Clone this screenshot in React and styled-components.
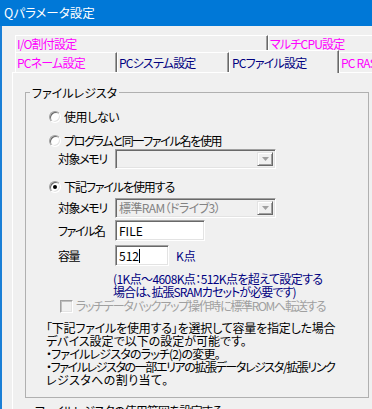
import styled, { createGlobalStyle } from "styled-components";

const GlobalStyle = createGlobalStyle`
  html, body {
    margin: 0;
    padding: 0;
    height: 409px;
    overflow: hidden;
    background: #f0f0f0;
  }
  body {
    font-family: "Noto Sans CJK JP", "Noto Sans", sans-serif;
    font-size: 12px;
    font-feature-settings: "palt";
    color: #000;
  }
`;

export default function App() {
  return (
    <>
      <GlobalStyle />
      <Window>
        <TitleBar>Qパラメータ設定</TitleBar>
        <Body>
          <TabControl>
            <TabRow $height={17}>
              <Tab $width={253} $color="#ff00ff">I/O割付設定</Tab>
              <Tab $color="#ff00ff">マルチCPU設定</Tab>
            </TabRow>
            <TabRow $height={20}>
              <Tab $width={102} $color="#ff00ff">PCネーム設定</Tab>
              <Tab $width={112} $color="#000080">PCシステム設定</Tab>
              <ActiveTab $width={110}>PCファイル設定</ActiveTab>
              <Tab $color="#ff00ff">PC RAS設定</Tab>
            </TabRow>
            <Panel>
              <GroupBox>
                <Legend>ファイルレジスタ</Legend>
                <RadioRow $gap={10} $spacing={-0.4}>
                  <Radio />
                  使用しない
                </RadioRow>
                <RadioRow $gap={8} $spacing={-1.3}>
                  <Radio />
                  プログラムと同一ファイル名を使用
                </RadioRow>
                <FieldRow $gap={0} $height={20}>
                  <FieldLabel>対象メモリ</FieldLabel>
                  <Combo>
                    <ComboText />
                    <DropButton>
                      <DropArrow />
                    </DropButton>
                  </Combo>
                </FieldRow>
                <RadioRow $gap={10} $spacing={-1.1}>
                  <Radio $checked />
                  下記ファイルを使用する
                </RadioRow>
                <FieldRow $gap={3} $height={20}>
                  <FieldLabel>対象メモリ</FieldLabel>
                  <Combo>
                    <ComboText>標準RAM（ドライブ3）</ComboText>
                    <DropButton>
                      <DropArrow />
                    </DropButton>
                  </Combo>
                </FieldRow>
                <FieldRow $gap={2} $height={21}>
                  <FieldLabel>ファイル名</FieldLabel>
                  <TextBox $width={90}>FILE</TextBox>
                </FieldRow>
                <FieldRow $gap={4} $height={21}>
                  <FieldLabel>容量</FieldLabel>
                  <TextBox $width={54}>
                    512
                    <Caret />
                  </TextBox>
                  <Unit>K点</Unit>
                </FieldRow>
                <Note>
                  <Line $spacing={-0.6}>(1K点～4608K点：512K点を超えて設定する</Line>
                  <Line $spacing={-0.9}>場合は、拡張SRAMカセットが必要です)</Line>
                </Note>
                <CheckRow>
                  <CheckBox />
                  ラッチデータバックアップ操作時に標準ROMへ転送する
                </CheckRow>
                <Paragraph>
                  <Line $spacing={-0.2}>「下記ファイルを使用する」を選択して容量を指定した場合</Line>
                  <Line $spacing={0}>デバイス設定で以下の設定が可能です。</Line>
                  <Line $spacing={-0.8}>・ファイルレジスタのラッチ(2)の変更。</Line>
                  <Line $spacing={-1.4}>・ファイルレジスタの一部エリアの拡張データレジスタ/拡張リンク</Line>
                  <Line $spacing={0.4}>レジスタへの割り当て。</Line>
                </Paragraph>
              </GroupBox>
              <CutText>ファイルレジスタの使用範囲を設定する</CutText>
            </Panel>
          </TabControl>
        </Body>
      </Window>
    </>
  );
}

function DropArrow() {
  return (
    <svg width="7" height="4" viewBox="0 0 7 4">
      <path d="M0 0h7L3.5 4z" fill="#a0a0a0" />
    </svg>
  );
}

const Window = styled.div`
  width: 372px;
  height: 409px;
  overflow: hidden;
  display: flex;
  flex-direction: column;
`;

const TitleBar = styled.div`
  height: 26px;
  flex-shrink: 0;
  background: #0078d7;
  color: #fff;
  padding-left: 4px;
  display: flex;
  align-items: center;
  font-size: 12.5px;
  line-height: 1;
`;

const Body = styled.div`
  flex: 1;
  display: flex;
  border-left: 2px solid #1a7fd6;
  padding: 9px 0 0 10px;
  min-height: 0;
`;

const TabControl = styled.div`
  width: 420px;
  flex-shrink: 0;
  display: flex;
  flex-direction: column;
`;

const TabRow = styled.div`
  display: flex;
  height: ${(p) => p.$height}px;
  padding-left: 3px;
  flex-shrink: 0;
`;

const Tab = styled.div`
  box-sizing: border-box;
  height: 100%;
  ${(p) => (p.$width ? `width: ${p.$width}px; flex-shrink: 0;` : "flex: 1;")}
  border-top: 1px solid #fff;
  border-left: 1px solid #fff;
  border-right: 1px solid #696969;
  box-shadow: inset -1px 0 0 #a0a0a0;
  padding: 0 3px 0 1px;
  display: flex;
  align-items: center;
  color: ${(p) => p.$color};
  line-height: 1;
  letter-spacing: -0.8px;
  white-space: nowrap;
  background: #f0f0f0;
`;

const ActiveTab = styled(Tab)`
  position: relative;
  z-index: 1;
  height: 23px;
  margin-top: -2px;
  padding-left: 2px;
  padding-top: 1px;
  color: #000080;
`;

const Panel = styled.div`
  flex: 1;
  border-top: 1px solid #fff;
  border-left: 1px solid #fff;
  background: #f0f0f0;
  padding: 13px 0 0 12px;
`;

const GroupBox = styled.fieldset`
  margin: 0;
  padding: 0;
  width: 344px;
  height: 312px;
  box-sizing: border-box;
  border: 1px solid #b0b0b0;
  min-width: 0;
  display: flex;
  flex-direction: column;
`;

const Legend = styled.legend`
  margin-left: 4px;
  padding: 0 2px;
  line-height: 13px;
  font-size: 12px;
`;

const RadioRow = styled.div`
  display: flex;
  align-items: center;
  gap: 3px;
  height: 16px;
  margin: ${(p) => p.$gap}px 0 0 23px;
  line-height: 1;
  letter-spacing: ${(p) => p.$spacing}px;
`;

const Radio = styled.span`
  width: 12px;
  height: 12px;
  box-sizing: border-box;
  border-radius: 50%;
  border: 1px solid;
  border-color: #a0a0a0 #fff #fff #a0a0a0;
  box-shadow: inset 1px 1px 0 #696969, inset -1px -1px 0 #e3e3e3;
  background: #fff;
  display: inline-flex;
  align-items: center;
  justify-content: center;
  flex-shrink: 0;

  &::after {
    content: "";
    width: 4px;
    height: 4px;
    border-radius: 50%;
    background: ${(p) => (p.$checked ? "#000" : "transparent")};
  }
`;

const FieldRow = styled.div`
  display: flex;
  align-items: center;
  height: ${(p) => p.$height}px;
  margin: ${(p) => p.$gap}px 0 0 32px;
`;

const FieldLabel = styled.span`
  width: 57px;
  flex-shrink: 0;
  line-height: 1;
  letter-spacing: -1.4px;
`;

const Combo = styled.div`
  width: 161px;
  height: 20px;
  box-sizing: border-box;
  display: flex;
  border: 1px solid;
  border-color: #a0a0a0 #fff #fff #a0a0a0;
  box-shadow: inset 1px 1px 0 #696969, inset -1px -1px 0 #e3e3e3;
  background: #f0f0f0;
  padding: 2px;
`;

const ComboText = styled.span`
  flex: 1;
  color: #838383;
  line-height: 14px;
  padding-left: 1px;
  letter-spacing: -0.6px;
  white-space: nowrap;
`;

const DropButton = styled.span`
  width: 16px;
  box-sizing: border-box;
  border: 1px solid;
  border-color: #e3e3e3 #696969 #696969 #e3e3e3;
  box-shadow: inset 1px 1px 0 #fff, inset -1px -1px 0 #a0a0a0;
  background: #f0f0f0;
  display: flex;
  align-items: center;
  justify-content: center;
`;

const TextBox = styled.div`
  width: ${(p) => p.$width}px;
  height: 21px;
  box-sizing: border-box;
  border: 1px solid;
  border-color: #a0a0a0 #fff #fff #a0a0a0;
  box-shadow: inset 1px 1px 0 #696969, inset -1px -1px 0 #e3e3e3;
  background: #fff;
  padding-left: 3px;
  display: flex;
  align-items: center;
  line-height: 1;
`;

const Caret = styled.span`
  width: 0;
  height: 14px;
  border-left: 1px solid #000;
`;

const Unit = styled.span`
  margin-left: 7px;
  color: #000080;
  line-height: 1;
`;

const Note = styled.div`
  margin: 6px 0 0 87px;
  color: #000080;
`;

const Line = styled.div`
  height: 13px;
  line-height: 13px;
  white-space: nowrap;
  letter-spacing: ${(p) => p.$spacing}px;
`;

const CheckRow = styled.div`
  display: flex;
  align-items: center;
  gap: 3px;
  height: 14px;
  margin: 1px 0 0 34px;
  color: #a0a0a0;
  line-height: 1;
  letter-spacing: -1.3px;
  white-space: nowrap;
`;

const CheckBox = styled.span`
  width: 13px;
  height: 13px;
  box-sizing: border-box;
  flex-shrink: 0;
  border: 1px solid;
  border-color: #a0a0a0 #fff #fff #a0a0a0;
  box-shadow: inset 1px 1px 0 #c0c0c0, inset -1px -1px 0 #e3e3e3;
  background: #f0f0f0;
`;

const Paragraph = styled.div`
  margin: 8px 0 0 20px;
`;

const CutText = styled.div`
  margin: 6px 0 0 10px;
  line-height: 13px;
  white-space: nowrap;
  letter-spacing: -0.8px;
`;
